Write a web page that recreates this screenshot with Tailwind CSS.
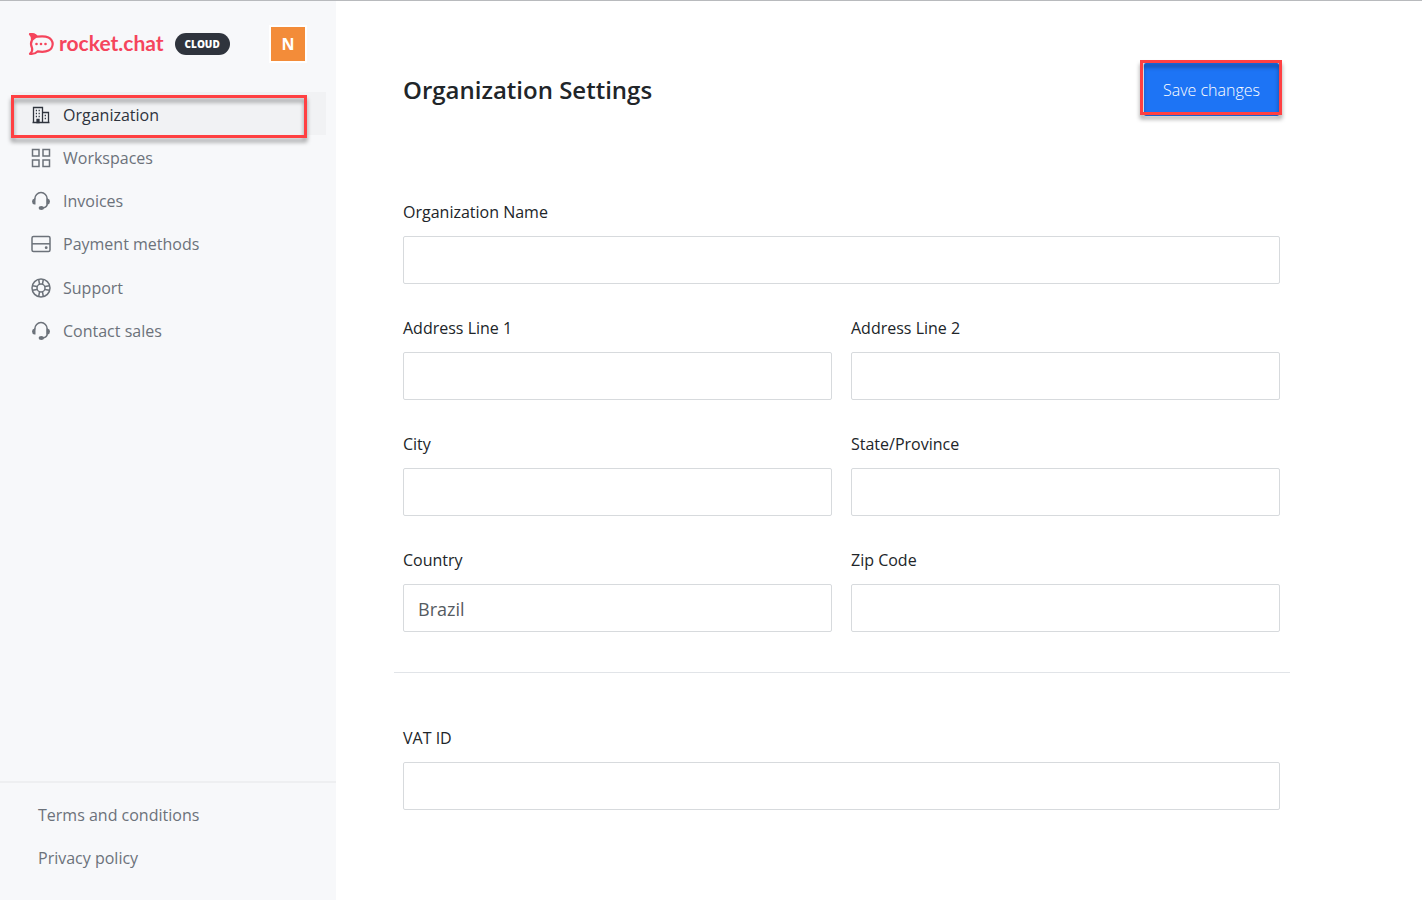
<!DOCTYPE html>
<html lang="en">
<head>
<meta charset="utf-8">
<meta name="viewport" content="width=device-width, initial-scale=1">
<title>Organization Settings</title>
<script src="https://cdn.jsdelivr.net/npm/@tailwindcss/browser@4"></script>
</head>
<body class="flex min-h-screen border-t border-[#b8babd] bg-white font-['Open_Sans','Noto_Sans',sans-serif] text-base text-[#212529]">
  <svg class="hidden" aria-hidden="true">
    <symbol id="headset" viewBox="0 0 20 20">
      <path d="M3.800 8.500V8a6.200 6.500 0 0 1 12.400 0v5q0 3-4.200 4" fill="none" stroke="currentColor" stroke-width="1.500"/>
      <path d="M4.500 7.500v6H3.500Q1 13 1 10.500T3.500 7.500zM15.500 7.500v6h1q2.500-.5 2.500-3t-2.500-3z" fill="currentColor"/>
      <ellipse cx="10.300" cy="17" rx="2.700" ry="2" fill="currentColor"/>
    </symbol>
  </svg>

  <aside class="flex w-[336px] shrink-0 flex-col bg-[#f7f8fa] text-[#6c727a]">
    <header class="flex items-center pt-6 pr-[29px] pl-7">
      <a href="#" class="flex items-center text-[#f5455c]">
        <svg class="mr-1 h-6 w-[27px]" viewBox="0 0 27 24" aria-hidden="true">
          <path fill="none" stroke="currentColor" stroke-width="2.200" stroke-linejoin="round" d="M2 2.200Q6.500 1.600 9 4.700Q24 2.500 24.700 12Q24 21.500 9.500 19.400Q6.500 22.500 2 21.800Q5 19 4 15.900Q2 12 4 8.100Q5 5 2 2.200Z"/>
          <path fill="currentColor" d="M1 1.200Q7 .5 10 4.500L5 8.500Q5 4.500 1 1.200Z"/>
          <circle cx="8.500" cy="12" r="1.300" fill="currentColor"/><circle cx="13" cy="12" r="1.300" fill="currentColor"/><circle cx="17.500" cy="12" r="1.300" fill="currentColor"/>
        </svg>
        <span class="pb-[3px] font-['Lato',sans-serif] text-[21px] leading-6 font-bold">rocket.chat</span>
      </a>
      <span class="ml-[11px] rounded-full bg-[#2f343d] px-[10px] text-[10px] leading-[22px] font-extrabold text-white">CLOUD</span>
      <button type="button" class="ml-auto size-[38px] border-2 border-white bg-[#f38c39] text-base font-bold text-white" aria-label="Account N">N</button>
    </header>

    <nav class="relative mt-[29px] mr-[10px] ml-3" aria-label="Main">
      <a href="#" aria-current="page" class="flex h-[43px] items-center gap-3 bg-[#f1f2f4] pt-0.5 pl-[19px] text-[#2f343d]">
        <svg class="size-5" viewBox="0 0 20 20" fill="none" stroke="currentColor" stroke-width="1.300" aria-hidden="true">
          <path d="M2.500 2.500h9v15h-9zM11.500 7.500h6v10h-6M1.500 17.500h17"/>
          <path stroke-dasharray="1.200 1.600" d="M4.800 5.500h5M4.800 8.500h5M4.800 11.500h5"/>
          <path d="M13.700 10.500h2M13.700 13.500h2" stroke-dasharray="1.200 .8"/>
          <path fill="currentColor" d="M6 14.500h2v3H6z"/>
        </svg>Organization</a>
      <a href="#" class="flex h-[43px] items-center gap-3 pt-0.5 pl-[19px]">
        <svg class="size-5" viewBox="0 0 20 20" fill="none" stroke="currentColor" stroke-width="1.500" aria-hidden="true"><path d="M1.500 1.500h6.500v6.500H1.500zM12 1.500h6.500v6.500H12zM1.500 12h6.500v6.500H1.500zM12 12h6.500v6.500H12z"/></svg>Workspaces</a>
      <a href="#" class="flex h-[43px] items-center gap-3 pt-0.5 pl-[19px]">
        <svg class="size-5" aria-hidden="true"><use href="#headset"/></svg>Invoices</a>
      <a href="#" class="flex h-11 items-center gap-3 pt-0.5 pl-[19px]">
        <svg class="size-5" viewBox="0 0 20 20" fill="none" stroke="currentColor" stroke-width="1.500" aria-hidden="true"><rect x="1" y="2.500" width="18" height="15" rx="1.500"/><path d="M1 9.800h18"/><circle cx="15.200" cy="13.700" r="1.400" fill="currentColor" stroke="none"/></svg>Payment methods</a>
      <a href="#" class="flex h-[43px] items-center gap-3 pt-0.5 pl-[19px]">
        <svg class="size-5" viewBox="0 0 20 20" fill="none" stroke="currentColor" stroke-width="1.500" aria-hidden="true"><circle cx="10" cy="10" r="9"/><circle cx="10" cy="10" r="4"/><path d="M7.700 1.500l.8 4.700M12.300 1.500l-.8 4.700M7.700 18.500l.8-4.700M12.300 18.500l-.8-4.700M1.500 7.700l4.700.8M1.500 12.300l4.700-.8M18.500 7.700l-4.700.8M18.500 12.300l-4.700-.8"/></svg>Support</a>
      <a href="#" class="flex h-[43px] items-center gap-3 pt-0.5 pl-[19px]">
        <svg class="size-5" aria-hidden="true"><use href="#headset"/></svg>Contact sales</a>
      <span class="pointer-events-none absolute top-[3px] right-[19px] -left-px h-[43px] border-3 border-[#ff4042] drop-shadow-[0_4px_2px_rgb(0_0_0/0.4)]"></span>
    </nav>

    <footer class="mt-auto flex flex-col border-t-2 border-[#eeeff1] pt-[11px] pb-5 pl-[38px]">
      <a href="#" class="leading-[43px]">Terms and conditions</a>
      <a href="#" class="leading-[43px]">Privacy policy</a>
    </footer>
  </aside>

  <main class="min-w-0 flex-1 pt-[59px] pr-[132px] pl-[58px]">
    <form>
      <div class="flex items-center justify-between pr-2 pl-[9px]">
        <h1 class="text-2xl font-semibold">Organization Settings</h1>
        <div class="relative p-[3px] pl-1">
          <button type="button" class="h-[53px] rounded-xs bg-[#1d74f5] px-[19px] font-light text-white">Save changes</button>
          <span class="pointer-events-none absolute inset-x-0 top-0 bottom-1 border-3 border-[#ff4042] drop-shadow-[0_4px_2px_rgb(0_0_0/0.4)]"></span>
        </div>
      </div>

      <div class="mt-[81px] grid grid-cols-2 gap-x-[19px] gap-y-8 border-b border-[#e1e4e8] pr-[10px] pb-10 pl-[9px]">
        <label class="col-span-2 flex flex-col gap-3">Organization Name
          <input type="text" class="h-12 w-full rounded-xs border border-[#d7dadd] px-[14px] pt-0.5 text-lg text-[#555b61]"></label>
        <label class="flex flex-col gap-3">Address Line 1
          <input type="text" class="h-12 w-full rounded-xs border border-[#d7dadd] px-[14px] pt-0.5 text-lg text-[#555b61]"></label>
        <label class="flex flex-col gap-3">Address Line 2
          <input type="text" class="h-12 w-full rounded-xs border border-[#d7dadd] px-[14px] pt-0.5 text-lg text-[#555b61]"></label>
        <label class="flex flex-col gap-3">City
          <input type="text" class="h-12 w-full rounded-xs border border-[#d7dadd] px-[14px] pt-0.5 text-lg text-[#555b61]"></label>
        <label class="flex flex-col gap-3">State/Province
          <input type="text" class="h-12 w-full rounded-xs border border-[#d7dadd] px-[14px] pt-0.5 text-lg text-[#555b61]"></label>
        <label class="flex flex-col gap-3">Country
          <input type="text" value="Brazil" class="h-12 w-full rounded-xs border border-[#d7dadd] px-[14px] pt-0.5 text-lg text-[#555b61]"></label>
        <label class="flex flex-col gap-3">Zip Code
          <input type="text" class="h-12 w-full rounded-xs border border-[#d7dadd] px-[14px] pt-0.5 text-lg text-[#555b61]"></label>
      </div>

      <div class="pt-[53px] pr-[10px] pb-10 pl-[9px]">
        <label class="flex flex-col gap-3">VAT ID
          <input type="text" class="h-12 w-full rounded-xs border border-[#d7dadd] px-[14px] pt-0.5 text-lg text-[#555b61]"></label>
      </div>
    </form>
  </main>
</body>
</html>
